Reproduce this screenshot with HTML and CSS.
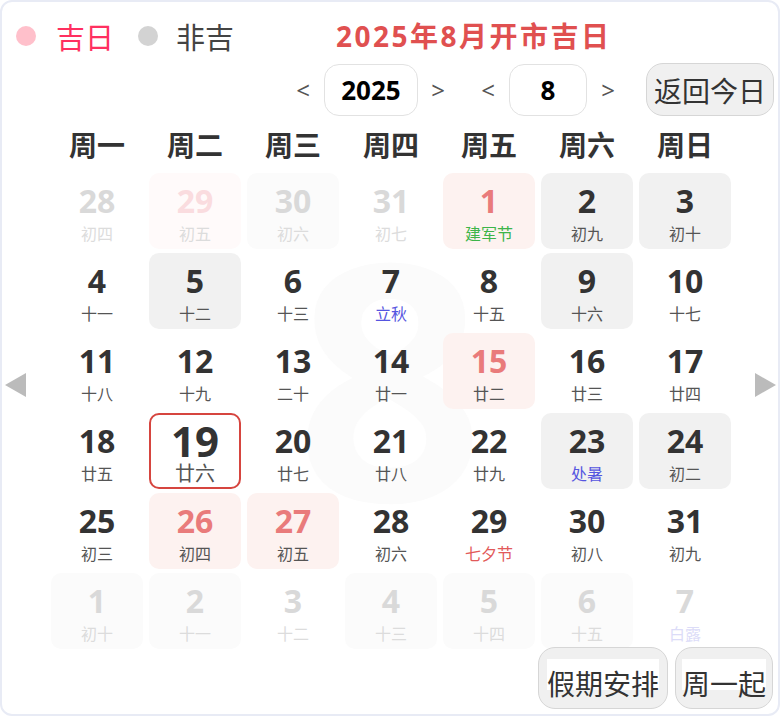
FILE: index.html
```html
<!DOCTYPE html>
<html lang="zh-CN">
<head>
<meta charset="utf-8">
<title>2025年8月开市吉日</title>
<link rel="stylesheet" href="styles.css">
</head>
<body>
<div class="frame">
  <div class="watermark">8</div>
  <div class="top">
    <div class="legend">
      <span class="dot dot-pink"></span><span class="legend-ji">吉日</span>
      <span class="dot dot-gray"></span><span class="legend-fei">非吉</span>
    </div>
    <div class="title">2025年8月开市吉日</div>
  </div>
  <div class="controls">
    <span class="arr arr-first">&lt;</span>
    <span class="box box-year">2025</span>
    <span class="arr arr-a">&gt;</span>
    <span class="arr arr-b">&lt;</span>
    <span class="box box-month">8</span>
    <span class="arr arr-c">&gt;</span>
    <span class="btn btn-today"><span class="btn-label">返回今日</span></span>
  </div>
  <div class="weekdays">
    <span>周一</span><span>周二</span><span>周三</span><span>周四</span><span>周五</span><span>周六</span><span>周日</span>
  </div>
  <div class="grid">
    <div class="cell other"><b>28</b><i>初四</i></div>
    <div class="cell other pink"><b>29</b><i>初五</i></div>
    <div class="cell other gray"><b>30</b><i>初六</i></div>
    <div class="cell other"><b>31</b><i>初七</i></div>
    <div class="cell pink"><b>1</b><i class="green">建军节</i></div>
    <div class="cell gray"><b>2</b><i>初九</i></div>
    <div class="cell gray"><b>3</b><i>初十</i></div>

    <div class="cell"><b>4</b><i>十一</i></div>
    <div class="cell gray"><b>5</b><i>十二</i></div>
    <div class="cell"><b>6</b><i>十三</i></div>
    <div class="cell"><b>7</b><i class="blue">立秋</i></div>
    <div class="cell"><b>8</b><i>十五</i></div>
    <div class="cell gray"><b>9</b><i>十六</i></div>
    <div class="cell"><b>10</b><i>十七</i></div>

    <div class="cell"><b>11</b><i>十八</i></div>
    <div class="cell"><b>12</b><i>十九</i></div>
    <div class="cell"><b>13</b><i>二十</i></div>
    <div class="cell"><b>14</b><i>廿一</i></div>
    <div class="cell pink"><b>15</b><i>廿二</i></div>
    <div class="cell"><b>16</b><i>廿三</i></div>
    <div class="cell"><b>17</b><i>廿四</i></div>

    <div class="cell"><b>18</b><i>廿五</i></div>
    <div class="cell today"><b>19</b><i>廿六</i></div>
    <div class="cell"><b>20</b><i>廿七</i></div>
    <div class="cell"><b>21</b><i>廿八</i></div>
    <div class="cell"><b>22</b><i>廿九</i></div>
    <div class="cell gray"><b>23</b><i class="blue">处暑</i></div>
    <div class="cell gray"><b>24</b><i>初二</i></div>

    <div class="cell"><b>25</b><i>初三</i></div>
    <div class="cell pink"><b>26</b><i>初四</i></div>
    <div class="cell pink"><b>27</b><i>初五</i></div>
    <div class="cell"><b>28</b><i>初六</i></div>
    <div class="cell"><b>29</b><i class="red">七夕节</i></div>
    <div class="cell"><b>30</b><i>初八</i></div>
    <div class="cell"><b>31</b><i>初九</i></div>

    <div class="cell other gray"><b>1</b><i>初十</i></div>
    <div class="cell other gray"><b>2</b><i>十一</i></div>
    <div class="cell other"><b>3</b><i>十二</i></div>
    <div class="cell other gray"><b>4</b><i>十三</i></div>
    <div class="cell other gray"><b>5</b><i>十四</i></div>
    <div class="cell other gray"><b>6</b><i>十五</i></div>
    <div class="cell other"><b>7</b><i class="blue">白露</i></div>
  </div>
  <div class="footer">
    <span class="btn btn-holiday"><span class="btn-label">假期安排</span></span>
    <span class="btn btn-week"><span class="btn-label">周一起</span></span>
  </div>
  <span class="nav nav-prev"></span>
  <span class="nav nav-next"></span>
</div>
</body>
</html>
```
FILE: styles.css
```css
* { box-sizing: border-box; }
html, body { margin: 0; padding: 0; background: #fff; }
body {
  font-family: "Noto Sans", "Noto Sans CJK SC", sans-serif;
  color: #333;
}
.frame {
  position: relative;
  width: 780px;
  height: 716px;
  border: 2px solid #e8ebf5;
  border-radius: 12px;
  overflow: hidden;
}
.watermark {
  position: absolute;
  left: 0;
  right: 0;
  top: 206px;
  text-align: center;
  font-size: 330px;
  line-height: 1;
  font-weight: 700;
  color: #fbfbfb;
  z-index: 0;
}
.top {
  position: relative;
  display: flex;
  align-items: center;
  height: 40px;
  margin-top: 14px;
  padding-left: 14px;
}
.legend { display: flex; align-items: center; }
.dot { width: 20px; height: 20px; border-radius: 50%; display: inline-block; }
.dot-pink { background: #ffc0cb; }
.dot-gray { background: #d3d3d3; margin-left: 24px; }
.legend-ji, .legend-fei {
  font-family: "Noto Sans CJK SC", sans-serif;
  font-size: 29px;
  line-height: 40px;
  margin-left: 20px;
}
.legend-ji { color: #ff3060; }
.legend-fei { color: #444; margin-left: 18px; }
.title {
  margin-left: 102px;
  font-size: 28px;
  letter-spacing: 2.5px;
  font-weight: 700;
  color: #e05050;
  line-height: 40px;
}
.controls {
  position: relative;
  display: flex;
  align-items: center;
  justify-content: flex-end;
  height: 53px;
  margin-top: 7px;
  padding-right: 4px;
}
.arr {
  width: 20px;
  text-align: center;
  font-size: 24px;
  color: #555;
  line-height: 30px;
}
.arr-a { margin-left: 10px; }
.arr-b { margin-left: 30px; }
.arr-c { margin-left: 11px; }
.box {
  display: flex;
  align-items: center;
  justify-content: center;
  height: 52px;
  border: 1.5px solid #e2e2e2;
  border-radius: 15px;
  font-size: 26px;
  font-weight: 700;
  color: #000;
  margin-left: 11px;
  background: #fff;
}
.box-year { width: 94px; }
.box-month { width: 78px; }
.btn {
  display: flex;
  align-items: center;
  justify-content: center;
  background: #f0f0f0;
  border: 1.5px solid #d6d6d6;
  border-radius: 17px;
  font-family: "Noto Sans CJK SC", sans-serif;
  font-size: 28px;
  color: #333;
}
.btn-today { width: 128px; height: 53px; margin-left: 28px; }
.btn-label { line-height: 36px; }
.weekdays {
  position: relative;
  display: grid;
  grid-template-columns: repeat(7, 92px);
  column-gap: 6px;
  padding-left: 49px;
  height: 46px;
  margin-top: 5px;
  align-items: center;
}
.weekdays span {
  text-align: center;
  font-family: "Noto Sans CJK SC", sans-serif;
  font-weight: 700;
  font-size: 28px;
  color: #333;
  line-height: 46px;
}
.grid {
  position: relative;
  z-index: 1;
  display: grid;
  grid-template-columns: repeat(7, 92px);
  grid-auto-rows: 76px;
  column-gap: 6px;
  row-gap: 4px;
  padding-left: 49px;
  margin-top: 6px;
}
.cell {
  border-radius: 10px;
  display: flex;
  flex-direction: column;
  align-items: center;
  padding-top: 10px;
}
.cell b {
  font-size: 32px;
  font-weight: 700;
  line-height: 36px;
  color: #333;
}
.cell i {
  font-style: normal;
  font-family: "Noto Sans CJK SC", sans-serif;
  font-size: 16px;
  line-height: 24px;
  margin-top: 2px;
  color: #555;
}
.cell.gray { background: #f1f1f1; }
.cell.pink { background: #fdf2f0; }
.cell.pink b { color: #e97b7b; }
.cell i.green { color: #3db54a; }
.cell i.blue { color: #5555e0; }
.cell i.red { color: #e25a5a; }
.cell.today {
  border: 2px solid #d6453f;
  padding-top: 8px;
}
.cell.today b { font-size: 42px; }
.cell.today i { font-size: 20px; }
.cell.other b { color: #d9d9d9; }
.cell.other i { color: #dcdcdc; }
.cell.other.gray { background: #fbfbfb; }
.cell.other.pink { background: #fffafa; }
.cell.other.pink b { color: #fadcdf; }
.cell.other i.blue { color: #dcdcf8; }
.footer {
  position: relative;
  z-index: 2;
  display: flex;
  justify-content: flex-end;
  gap: 7px;
  padding-right: 5px;
  margin-top: -2px;
}
.btn-holiday { width: 130px; height: 62px; }
.btn-week { width: 98px; height: 62px; }
.footer .btn-label {
  display: inline-block;
  background: linear-gradient(#fff 0, #fff 31px, transparent 31px);
  line-height: 40px;
  padding-top: 4px;
  margin-top: 6px;
}
.nav {
  position: absolute;
  top: 371px;
  width: 0;
  height: 0;
  border-top: 12px solid transparent;
  border-bottom: 12px solid transparent;
}
.nav-prev { left: 3px; border-right: 21px solid #bbb; }
.nav-next { right: 2px; border-left: 21px solid #bbb; }
```
